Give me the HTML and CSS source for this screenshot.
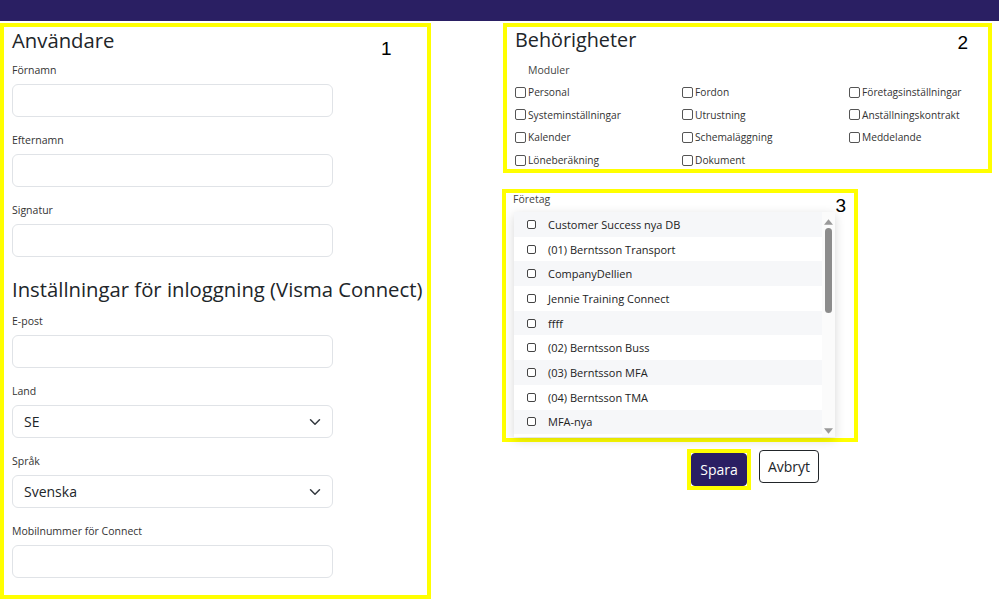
FILE: index.html
```html
<!DOCTYPE html>
<html lang="sv">
<head>
<meta charset="utf-8">
<title>Användare</title>
<link rel="stylesheet" href="styles.css">
</head>
<body>
<div class="topbar"></div>
<div class="main">
  <section class="box box-user">
    <span class="mark mark-1">1</span>
    <h2 class="title">Användare</h2>
    <div class="field"><label class="lbl">Förnamn</label><div class="input"></div></div>
    <div class="field"><label class="lbl">Efternamn</label><div class="input"></div></div>
    <div class="field"><label class="lbl">Signatur</label><div class="input"></div></div>
    <h2 class="title title-2">Inställningar för inloggning (Visma Connect)</h2>
    <div class="field"><label class="lbl">E-post</label><div class="input"></div></div>
    <div class="field"><label class="lbl">Land</label>
      <div class="input select"><span>SE</span>
        <svg class="chev" viewBox="0 0 16 16" width="12" height="12"><path d="M2 5l6 6 6-6" fill="none" stroke="#343a40" stroke-width="2" stroke-linecap="round" stroke-linejoin="round"/></svg>
      </div>
    </div>
    <div class="field"><label class="lbl">Språk</label>
      <div class="input select"><span>Svenska</span>
        <svg class="chev" viewBox="0 0 16 16" width="12" height="12"><path d="M2 5l6 6 6-6" fill="none" stroke="#343a40" stroke-width="2" stroke-linecap="round" stroke-linejoin="round"/></svg>
      </div>
    </div>
    <div class="field"><label class="lbl">Mobilnummer för Connect</label><div class="input"></div></div>
  </section>

  <div class="right">
    <section class="box box-perm">
      <span class="mark mark-2">2</span>
      <h2 class="title">Behörigheter</h2>
      <div class="moduler">Moduler</div>
      <div class="grid">
        <label class="chk"><input type="checkbox"><span>Personal</span></label>
        <label class="chk"><input type="checkbox"><span>Fordon</span></label>
        <label class="chk"><input type="checkbox"><span>Företagsinställningar</span></label>
        <label class="chk"><input type="checkbox"><span>Systeminställningar</span></label>
        <label class="chk"><input type="checkbox"><span>Utrustning</span></label>
        <label class="chk"><input type="checkbox"><span>Anställningskontrakt</span></label>
        <label class="chk"><input type="checkbox"><span>Kalender</span></label>
        <label class="chk"><input type="checkbox"><span>Schemaläggning</span></label>
        <label class="chk"><input type="checkbox"><span>Meddelande</span></label>
        <label class="chk"><input type="checkbox"><span>Löneberäkning</span></label>
        <label class="chk"><input type="checkbox"><span>Dokument</span></label>
      </div>
    </section>

    <section class="box box-comp">
      <span class="mark mark-3">3</span>
      <div class="comp-label">Företag</div>
      <div class="list">
        <div class="rows">
          <div class="row"><input type="checkbox" class="lchk"><span>Customer Success nya DB</span></div>
          <div class="row"><input type="checkbox" class="lchk"><span>(01) Berntsson Transport</span></div>
          <div class="row"><input type="checkbox" class="lchk"><span>CompanyDellien</span></div>
          <div class="row"><input type="checkbox" class="lchk"><span>Jennie Training Connect</span></div>
          <div class="row"><input type="checkbox" class="lchk"><span>ffff</span></div>
          <div class="row"><input type="checkbox" class="lchk"><span>(02) Berntsson Buss</span></div>
          <div class="row"><input type="checkbox" class="lchk"><span>(03) Berntsson MFA</span></div>
          <div class="row"><input type="checkbox" class="lchk"><span>(04) Berntsson TMA</span></div>
          <div class="row"><input type="checkbox" class="lchk"><span>MFA-nya</span></div>
          <div class="row"></div>
        </div>
        <div class="sbar">
          <svg class="arrow" viewBox="0 0 10 6" width="9" height="6"><path d="M0 6L5 0L10 6Z" fill="#9a9a9a"/></svg>
          <div class="thumb"></div>
          <div class="track"></div>
          <svg class="arrow" viewBox="0 0 10 6" width="9" height="6"><path d="M0 0L5 6L10 0Z" fill="#9a9a9a"/></svg>
        </div>
      </div>
    </section>

    <div class="actions">
      <div class="hl"><button class="btn btn-primary">Spara</button></div>
      <button class="btn btn-outline">Avbryt</button>
    </div>
  </div>
</div>
</body>
</html>
```

FILE: styles.css
```css
* { box-sizing: border-box; }
html, body { margin: 0; padding: 0; background: #fff; }
body {
  font-family: "Open Sans", "Noto Sans", sans-serif;
  color: #212529;
  width: 999px;
  height: 607px;
  overflow: hidden;
}
.topbar { height: 21px; background: #2a1f63; }
.main { display: flex; padding-top: 2px; gap: 71px; }

.box { position: relative; border: 4px solid #ffff00; }
.mark {
  position: absolute;
  font-family: "Liberation Sans", Arial, sans-serif;
  font-size: 19px;
  color: #000;
  line-height: 1;
}
.mark-1 { left: 377px; top: 12px; }
.mark-2 { right: 20px; top: 6px; }
.mark-3 { right: 8px; top: 3px; }

.box-user { width: 431px; height: 576px; padding: 0 0 0 8px; }
.title {
  margin: 0;
  font-weight: 400;
  font-size: 20.3px;
  line-height: 26px;
  color: #212529;
}
.box-perm .title { font-size: 19.8px; }
.title-2 { margin-top: 19px; white-space: nowrap; }
.field { display: flex; flex-direction: column; margin-top: 10px; }
.field + .field { margin-top: 16px; }
.title-2 + .field { margin-top: 12px; }
.lbl {
  font-size: 10.5px;
  line-height: 15px;
  color: #333;
  margin-bottom: 6px;
}
.input {
  width: 321px;
  height: 33px;
  border: 1px solid #e0e3e7;
  border-radius: 6px;
  background: #fff;
}
.select {
  display: flex;
  align-items: center;
  justify-content: space-between;
  padding: 0 11px 0 11px;
  font-size: 14px;
  color: #212529;
}
.chev { display: block; }

.right { display: flex; flex-direction: column; }
.box-perm { width: 489px; height: 150px; margin-left: 1px; padding: 0 0 0 8px; }
.moduler { font-size: 10.5px; line-height: 15px; color: #444; margin: 10px 0 0 13px; }
.grid {
  display: grid;
  grid-template-columns: 167px 167px 150px;
  row-gap: 6.7px;
  margin-top: 6px;
}
.chk {
  display: flex;
  align-items: center;
  gap: 2px;
  font-size: 10.2px;
  line-height: 16px;
  color: #333;
  white-space: nowrap;
}
.chk input {
  appearance: none;
  -webkit-appearance: none;
  margin: 0;
  width: 11px;
  height: 11px;
  border: 1px solid #555;
  border-radius: 2px;
  background: #fff;
}

.box-comp { width: 356px; height: 253px; margin-top: 16px; padding: 0 0 0 7px; }
.comp-label { font-size: 10.5px; line-height: 12px; color: #444; margin-top: 0; }
.list {
  display: flex;
  width: 321px;
  height: 225px;
  margin: 7px 0 0 1px;
  overflow: hidden;
  background: #fff;
  box-shadow: 0 3px 10px rgba(0,0,0,0.16);
}
.rows { flex: 1; display: flex; flex-direction: column; }
.row {
  flex: 0 0 24.7px;
  display: flex;
  align-items: center;
  padding-left: 13px;
  gap: 12px;
  font-size: 11px;
  color: #222;
  background: #fff;
}
.row:nth-child(odd) { background: #f6f7f9; }
.lchk {
  appearance: none;
  -webkit-appearance: none;
  margin: 0;
  width: 9px;
  height: 9px;
  border: 1.3px solid #444;
  border-radius: 2px;
  background: #fff;
}
.sbar {
  width: 13px;
  display: flex;
  flex-direction: column;
  align-items: center;
  padding: 7px 0 3px;
  background: #fbfbfb;
}
.arrow { display: block; flex: 0 0 auto; }
.thumb { width: 7px; height: 85px; margin-top: 3px; border-radius: 4px; background: #8c8c8c; }
.track { flex: 1; }

.actions { display: flex; align-items: flex-start; gap: 8px; margin-top: 7px; padding-left: 185px; }
.hl { border: 4px solid #ffff00; }
.btn {
  display: block;
  font-family: "Open Sans", "Noto Sans", sans-serif;
  font-size: 14px;
  height: 33px;
  border-radius: 4px;
  padding: 0;
  cursor: pointer;
}
.btn-primary { width: 56px; background: #2a1f63; color: #fff; border: 1px solid #2a1f63; }
.btn-outline { width: 60px; margin-top: 1px; background: #fff; color: #212529; border: 1px solid #212529; }
```
